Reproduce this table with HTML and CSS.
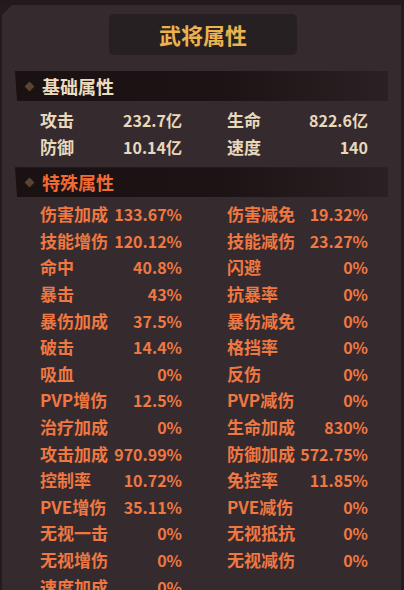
FILE: index.html
```html
<!DOCTYPE html>
<html lang="zh">
<head>
<meta charset="utf-8">
<link rel="stylesheet" href="styles.css">
</head>
<body>
<div class="topstrip"></div>
<div class="panel">
  <div class="title">武将属性</div>

  <div class="section-head base"><span class="diamond"></span><span class="head-text">基础属性</span></div>
  <div class="stats base-stats">
    <div class="pair"><span>攻击</span><span>232.7亿</span></div>
    <div class="pair"><span>生命</span><span>822.6亿</span></div>
    <div class="pair"><span>防御</span><span>10.14亿</span></div>
    <div class="pair"><span>速度</span><span>140</span></div>
  </div>

  <div class="section-head special"><span class="diamond"></span><span class="head-text">特殊属性</span></div>
  <div class="stats special-stats">
    <div class="pair"><span>伤害加成</span><span>133.67%</span></div>
    <div class="pair"><span>伤害减免</span><span>19.32%</span></div>
    <div class="pair"><span>技能增伤</span><span>120.12%</span></div>
    <div class="pair"><span>技能减伤</span><span>23.27%</span></div>
    <div class="pair"><span>命中</span><span>40.8%</span></div>
    <div class="pair"><span>闪避</span><span>0%</span></div>
    <div class="pair"><span>暴击</span><span>43%</span></div>
    <div class="pair"><span>抗暴率</span><span>0%</span></div>
    <div class="pair"><span>暴伤加成</span><span>37.5%</span></div>
    <div class="pair"><span>暴伤减免</span><span>0%</span></div>
    <div class="pair"><span>破击</span><span>14.4%</span></div>
    <div class="pair"><span>格挡率</span><span>0%</span></div>
    <div class="pair"><span>吸血</span><span>0%</span></div>
    <div class="pair"><span>反伤</span><span>0%</span></div>
    <div class="pair"><span>PVP增伤</span><span>12.5%</span></div>
    <div class="pair"><span>PVP减伤</span><span>0%</span></div>
    <div class="pair"><span>治疗加成</span><span>0%</span></div>
    <div class="pair"><span>生命加成</span><span>830%</span></div>
    <div class="pair"><span>攻击加成</span><span>970.99%</span></div>
    <div class="pair"><span>防御加成</span><span>572.75%</span></div>
    <div class="pair"><span>控制率</span><span>10.72%</span></div>
    <div class="pair"><span>免控率</span><span>11.85%</span></div>
    <div class="pair"><span>PVE增伤</span><span>35.11%</span></div>
    <div class="pair"><span>PVE减伤</span><span>0%</span></div>
    <div class="pair"><span>无视一击</span><span>0%</span></div>
    <div class="pair"><span>无视抵抗</span><span>0%</span></div>
    <div class="pair"><span>无视增伤</span><span>0%</span></div>
    <div class="pair"><span>无视减伤</span><span>0%</span></div>
    <div class="pair"><span>速度加成</span><span>0%</span></div>
  </div>
</div>
</body>
</html>
```

FILE: styles.css
```css
* { box-sizing: border-box; }
html, body {
  margin: 0;
  padding: 0;
  background: #231b1d;
  width: 404px;
  height: 590px;
  overflow: hidden;
  font-family: "Noto Sans CJK SC", "Noto Sans", sans-serif;
  font-weight: 700;
}
.topstrip {
  height: 5px;
  background: #221a1c;
}
.panel {
  margin: 0 3px 0 2px;
  height: 600px;
  background: #352b2e;
  clip-path: polygon(10px 0, 100% 0, 100% 100%, 0 100%, 0 10px);
  padding-top: 9px;
}
.title {
  width: 188px;
  height: 41px;
  margin: 0 auto;
  margin-left: 107px;
  background: #272022;
  border-radius: 5px;
  color: #eab34f;
  font-size: 22px;
  line-height: 41px;
  text-align: center;
  letter-spacing: 0;
}
.section-head {
  margin-left: 13px;
  width: 373px;
  height: 30px;
  display: flex;
  align-items: center;
  background: linear-gradient(90deg, #1a1112 0%, #1c1314 55%, #2b2124 100%);
  clip-path: polygon(0 0, 100% 0, 100% 100%, 2px 100%);
}
.section-head.base { margin-top: 16px; }
.section-head.special { margin-top: 7px; }
.diamond {
  width: 7px;
  height: 7px;
  background: #5a4330;
  transform: rotate(45deg);
  margin-left: 11px;
  margin-right: 9px;
}
.head-text {
  font-size: 18px;
  line-height: 30px;
}
.base .head-text { color: #ecdcbf; }
.special .head-text { color: #f06a34; }
.stats {
  display: grid;
  grid-template-columns: 142px 141px;
  column-gap: 45px;
  margin-left: 38px;
  width: 328px;
}
.pair {
  display: flex;
  justify-content: space-between;
  height: 26.6px;
  line-height: 26.6px;
  font-size: 17px;
  white-space: nowrap;
}
.pair span:last-child { font-size: 16px; }
.base-stats { margin-top: 6px; color: #e8d8bc; }
.special-stats { margin-top: 4px; color: #ef7742; }
```
